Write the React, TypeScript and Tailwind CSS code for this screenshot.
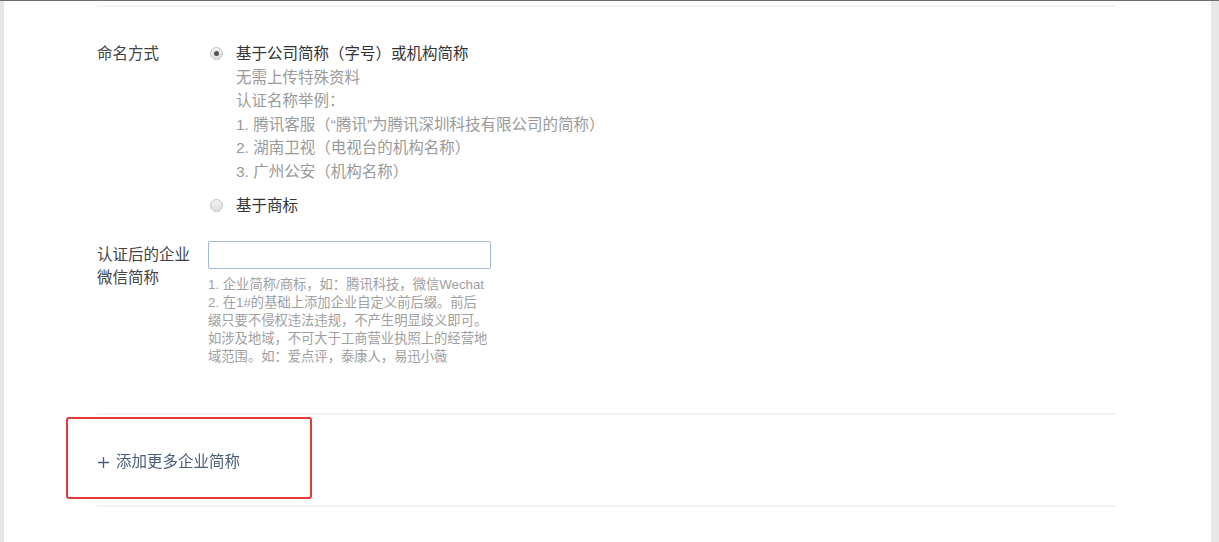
import { useState } from 'react';

const font = 'font-["Liberation_Sans","Noto_Sans_CJK_SC",sans-serif]';

function Radio({ checked }: { checked: boolean }) {
  return (
    <span className="flex h-[13px] w-[13px] items-center justify-center rounded-full border border-[#c4c4c4] bg-gradient-to-b from-[#f4f4f4] to-[#dcdcdc]">
      {checked && <span className="h-[5px] w-[5px] rounded-full bg-[#555]" />}
    </span>
  );
}

const examples = [
  '无需上传特殊资料',
  '认证名称举例：',
  '1. 腾讯客服（“腾讯”为腾讯深圳科技有限公司的简称）',
  '2. 湖南卫视（电视台的机构名称）',
  '3. 广州公安（机构名称）',
];

// line breaks kept as in the design
const hints = [
  '1. 企业简称/商标，如：腾讯科技，微信Wechat',
  '2. 在1#的基础上添加企业自定义前后缀。前后',
  '缀只要不侵权违法违规，不产生明显歧义即可。',
  '如涉及地域，不可大于工商营业执照上的经营地',
  '域范围。如：爱点评，泰康人，易迅小薇',
];

export default function App() {
  const [mode, setMode] = useState<'name' | 'brand'>('name');
  const [shortName, setShortName] = useState('');

  return (
    <div className={`relative flex h-[542px] w-full overflow-hidden border-t border-[#6e6e6e] bg-white ${font}`}>
      <div className="w-[4px] shrink-0 bg-[#e6e6e6]" />

      <div className="flex-1 pl-[93px] pt-[4px]">
        <div className="w-[1019px]">
          <div className="h-[2px] bg-[#f3f3f3]" />

          {/* 命名方式 */}
          <div className="mt-[35px] flex text-[15.5px] leading-[23.6px]">
            <div className="w-[111px] shrink-0 text-[#444]">命名方式</div>
            <div>
              <button
                type="button"
                onClick={() => setMode('name')}
                className="flex items-center text-[#333]"
              >
                <span className="flex w-[28px] pl-[2px]">
                  <Radio checked={mode === 'name'} />
                </span>
                基于公司简称（字号）或机构简称
              </button>
              <div className="pl-[28px] text-[#9a9a9a]">
                {examples.map((line) => (
                  <div key={line}>{line}</div>
                ))}
              </div>
              <button
                type="button"
                onClick={() => setMode('brand')}
                className="mt-[10px] flex items-center text-[#333]"
              >
                <span className="flex w-[28px] pl-[2px]">
                  <Radio checked={mode === 'brand'} />
                </span>
                基于商标
              </button>
            </div>
          </div>

          {/* 认证后的企业微信简称 */}
          <div className="mt-[24px] flex">
            <div className="w-[111px] shrink-0 pr-[12px] pt-[2px] text-[15.5px] leading-[23px] text-[#444]">
              认证后的企业微信简称
            </div>
            <div className="w-[290px]">
              <input
                type="text"
                autoFocus
                value={shortName}
                onChange={(e) => setShortName(e.target.value)}
                className="block h-[28px] w-[283px] rounded-[2px] border border-[#a3b9d9] px-[7px] text-[14px] text-[#333] caret-[#333] outline-none"
              />
              <div className="mt-[7px] whitespace-nowrap text-[13.3px] leading-[18px] text-[#a0a0a0]">
                {hints.map((line) => (
                  <div key={line}>{line}</div>
                ))}
              </div>
            </div>
          </div>

          <div className="mt-[47px] h-[2px] bg-[#f3f3f3]" />

          <div className="pb-[31px] pt-[35px]">
            <button type="button" className="flex items-center gap-[7px] text-[15.5px] leading-[24px] text-[#4b5e7c]">
              <svg width="11" height="11" viewBox="0 0 11 11" className="ml-[1px]">
                <path d="M5.5 0v11M0 5.5h11" stroke="#4b5e7c" strokeWidth="1.3" />
              </svg>
              添加更多企业简称
            </button>
          </div>

          <div className="h-[2px] bg-[#f3f3f3]" />
        </div>
      </div>

      <div className="w-[8px] shrink-0 bg-[#e8e8e8]" />

      {/* annotation box */}
      <div className="pointer-events-none absolute left-[66px] top-[416px] h-[82px] w-[246px] rounded-[3px] border-2 border-[#e33a34]" />
    </div>
  );
}
